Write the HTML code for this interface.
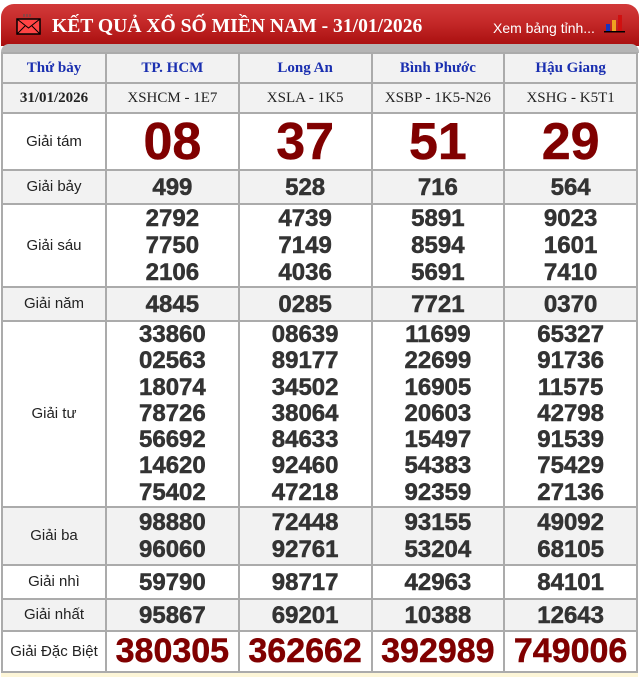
<!DOCTYPE html>
<html><head><meta charset="utf-8"><style>
body{margin:0;background:#fff;width:640px;height:677px;overflow:hidden;font-family:"Liberation Sans",Arial,sans-serif}
.hd{position:absolute;left:1px;top:4px;width:638px;height:42px;border-radius:13px 13px 0 0;background:linear-gradient(#d23a3a 0%,#c42828 45%,#a80e0e 100%)}
.strip{position:absolute;left:1px;top:44px;width:638px;height:9px;background:#b5b5b5;border-radius:8px 8px 0 0}
.title{position:absolute;left:52px;top:16px;color:#fff;font:bold 19.6px "Liberation Serif",serif;white-space:nowrap}
.xem{position:absolute;left:493px;top:20px;color:#fff;font-size:14px}
table{position:absolute;left:1px;top:52px;border-collapse:collapse;width:637px;table-layout:fixed}
td{border:2px solid #ababab;text-align:center;padding:0;color:#333;font:bold 24px "Liberation Sans",Arial,sans-serif;line-height:27px;overflow:hidden;-webkit-text-stroke:0.5px #333}
table tr td.l{font-weight:normal;font-size:15px;color:#222;line-height:18px;-webkit-text-stroke:0}
tr.g td{background:#f2f2f2}
table tr.h td{color:#1a2fb0;font:bold 15px "Liberation Serif",serif;height:28px;-webkit-text-stroke:0}
table tr.d td{font:15px "Liberation Serif",serif;color:#222;height:28px;-webkit-text-stroke:0}
table tr.d td.first{font-weight:bold}
.t td{font-size:52px;color:#800000;line-height:52px;-webkit-text-stroke:0.5px #800000}
.db td{font-size:34px;color:#800000;line-height:37px;-webkit-text-stroke:0.5px #800000}
.foot{position:absolute;left:1px;top:673px;width:637px;height:4px;background:#fdf6d8}
</style></head><body>
<div class="hd"></div><div class="strip"></div>
<svg style="position:absolute;left:16px;top:13px" width="26" height="22" viewBox="0 0 26 22">
<path d="M8 1v3M11 1v3M14 1v3" stroke="#555" stroke-width="1"/>
<rect x="1" y="6" width="23" height="15" fill="#f44" stroke="#000" stroke-width="1.5"/>
<path d="M1 6l11.5 9L24 6M1 21l8-8M24 21l-8-8" stroke="#000" stroke-width="1" fill="none"/></svg>
<div class="title">KẾT QUẢ XỔ SỐ MIỀN NAM - 31/01/2026</div>
<div class="xem">Xem bảng tỉnh...</div>
<svg style="position:absolute;left:603px;top:14px" width="24" height="20"><rect x="3" y="10" width="4" height="7" fill="#1833c0"/><rect x="9" y="6" width="4" height="11" fill="#f0a020"/><rect x="15" y="1" width="4" height="16" fill="#d01010"/><rect x="1" y="17" width="21" height="1.5" fill="#000"/></svg>
<table>
<col style="width:104px"><col><col><col><col>
<tr class="h g"><td>Thứ bảy</td><td>TP. HCM</td><td>Long An</td><td>Bình Phước</td><td>Hậu Giang</td></tr>
<tr class="d g"><td class="first">31/01/2026</td><td>XSHCM - 1E7</td><td>XSLA - 1K5</td><td>XSBP - 1K5-N26</td><td>XSHG - K5T1</td></tr>
<tr class="t"><td class="l" style="height:55px">Giải tám</td><td>08</td><td>37</td><td>51</td><td>29</td></tr>
<tr class="g"><td class="l" style="height:32px">Giải bảy</td><td>499</td><td>528</td><td>716</td><td>564</td></tr>
<tr><td class="l" style="height:78px">Giải sáu</td><td>2792<br>7750<br>2106</td><td>4739<br>7149<br>4036</td><td>5891<br>8594<br>5691</td><td>9023<br>1601<br>7410</td></tr>
<tr class="g"><td class="l" style="height:32px">Giải năm</td><td>4845</td><td>0285</td><td>7721</td><td>0370</td></tr>
<tr><td class="l" style="height:183px;line-height:18px">Giải tư</td><td style="line-height:26.3px">33860<br>02563<br>18074<br>78726<br>56692<br>14620<br>75402</td><td style="line-height:26.3px">08639<br>89177<br>34502<br>38064<br>84633<br>92460<br>47218</td><td style="line-height:26.3px">11699<br>22699<br>16905<br>20603<br>15497<br>54383<br>92359</td><td style="line-height:26.3px">65327<br>91736<br>11575<br>42798<br>91539<br>75429<br>27136</td></tr>
<tr class="g"><td class="l" style="height:56px">Giải ba</td><td>98880<br>96060</td><td>72448<br>92761</td><td>93155<br>53204</td><td>49092<br>68105</td></tr>
<tr><td class="l" style="height:32px">Giải nhì</td><td>59790</td><td>98717</td><td>42963</td><td>84101</td></tr>
<tr class="g"><td class="l" style="height:30px">Giải nhất</td><td>95867</td><td>69201</td><td>10388</td><td>12643</td></tr>
<tr class="db"><td class="l" style="height:39px">Giải Đặc Biệt</td><td>380305</td><td>362662</td><td>392989</td><td>749006</td></tr>
</table>
<div class="foot"></div>
</body></html>
